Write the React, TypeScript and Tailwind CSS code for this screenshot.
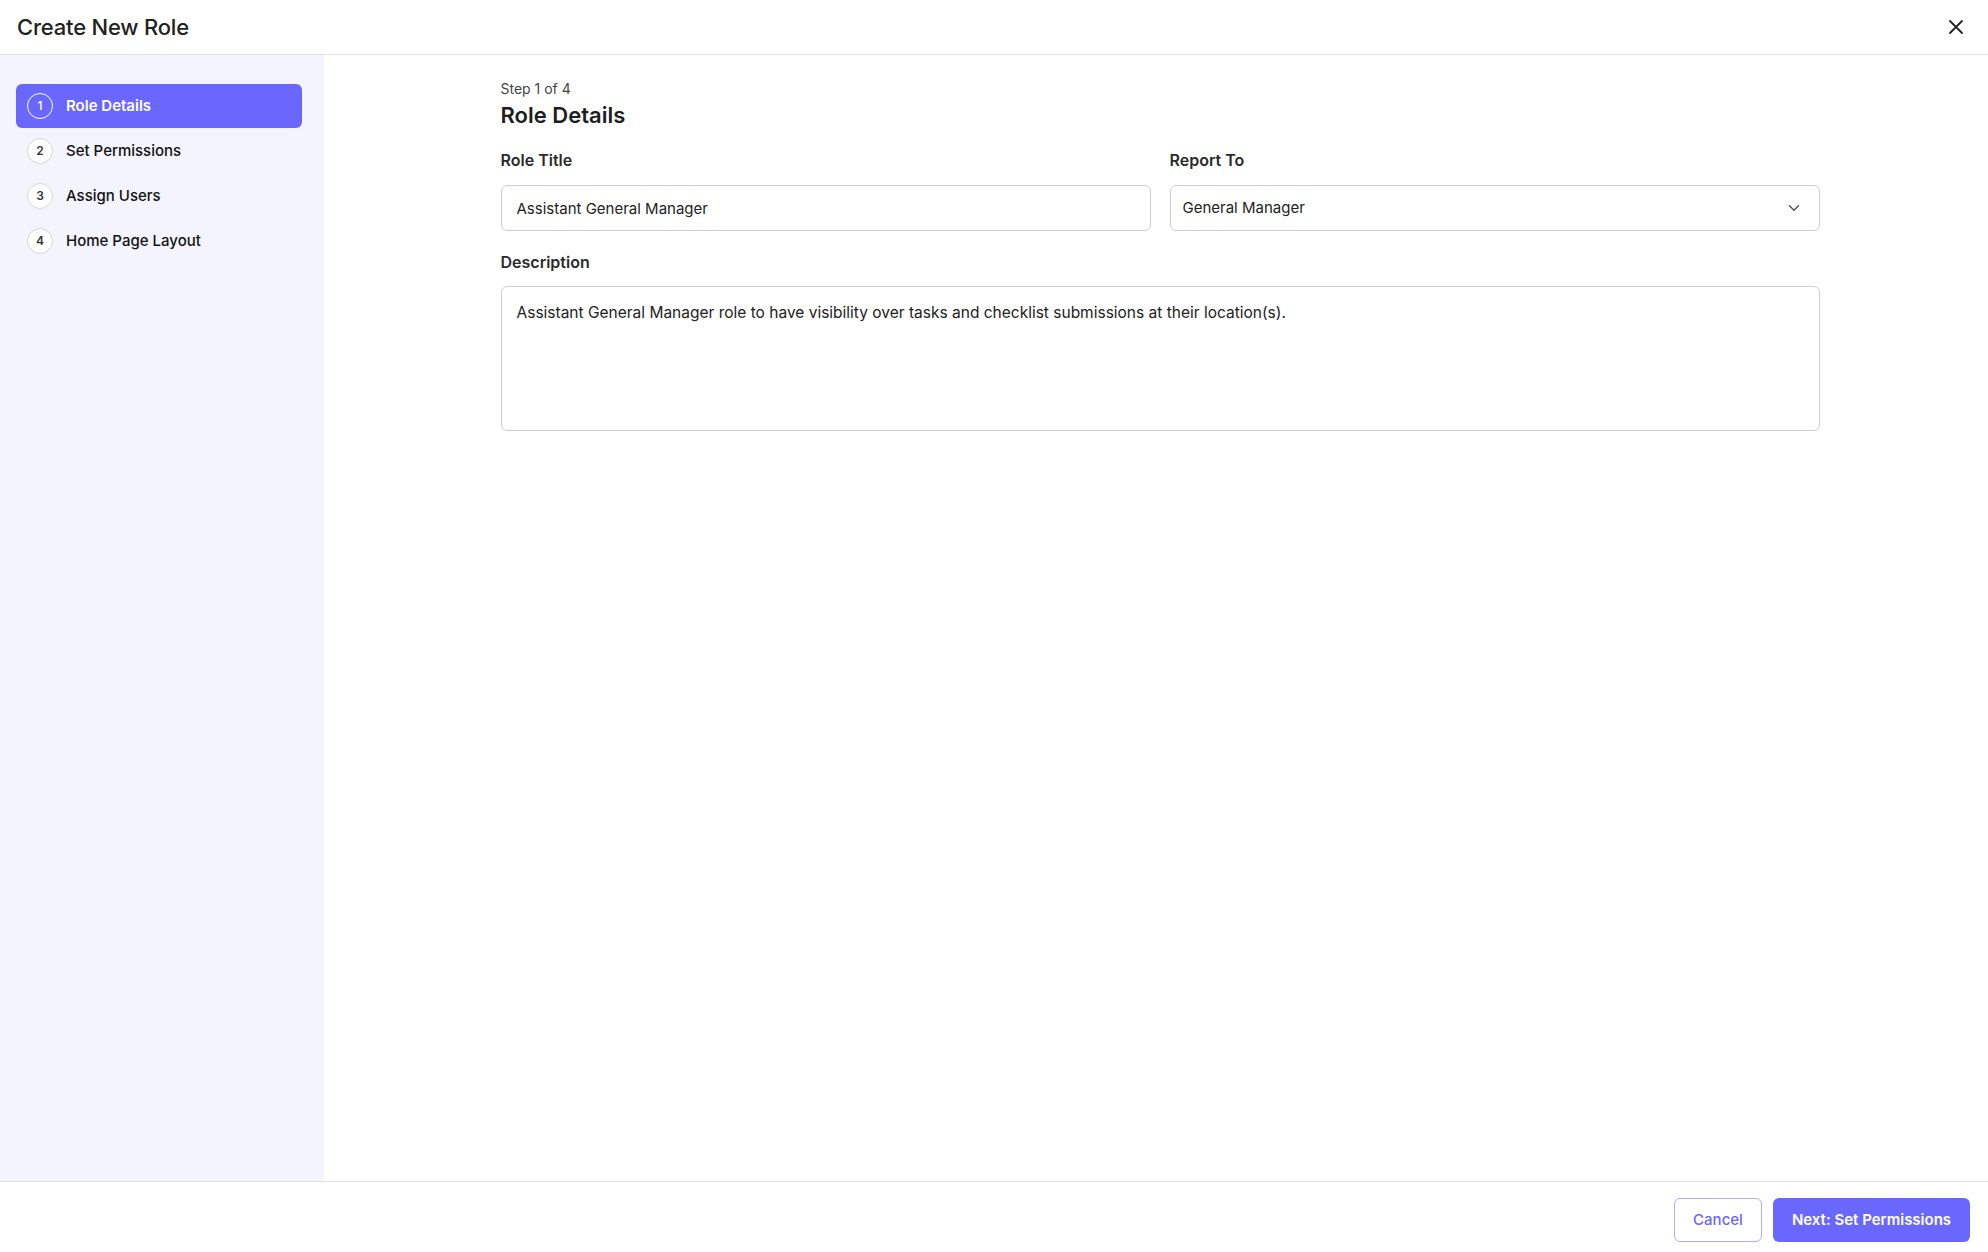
import React from "react";
import { ChevronDown } from "lucide-react";

const STEPS = ["Role Details", "Set Permissions", "Assign Users", "Home Page Layout"];

function CloseIcon() {
  return (
    <svg width="16" height="16" viewBox="0 0 16 16" fill="none" stroke="#222" strokeWidth="1.8" strokeLinecap="round">
      <path d="M2 2L14 14M14 2L2 14" />
    </svg>
  );
}

export default function App() {
  const active = 0;

  return (
    <div className="h-screen w-full flex flex-col bg-white text-[#1d1d1f]" style={{ fontFamily: "Inter, 'Noto Sans', sans-serif" }}>
      {/* header */}
      <div className="h-[55px] shrink-0 flex items-center justify-between pl-[17px] pr-[20px] border-b border-[#e2e2e2]">
        <h1 className="text-[22px] font-medium tracking-[-0.2px] text-[#222]">Create New Role</h1>
        <button className="p-1">
          <CloseIcon />
        </button>
      </div>

      <div className="flex-1 flex min-h-0">
        {/* stepper */}
        <div className="w-[324px] shrink-0 bg-[#f4f4fe] pl-4 pr-[22px] pt-[29px] flex flex-col gap-[1px]">
          {STEPS.map((label, i) => {
            const isActive = i === active;
            return (
              <div
                key={label}
                className={
                  isActive
                    ? "h-[44px] flex items-center gap-[13px] pl-[11px] rounded-md bg-[#6a67fe] text-white"
                    : "h-[44px] flex items-center gap-[13px] pl-[11px] rounded-md text-[#111]"
                }
              >
                <span
                  className={
                    isActive
                      ? "w-[26px] h-[26px] rounded-full border-[1.5px] border-white flex items-center justify-center text-[12px] font-medium"
                      : "w-[26px] h-[26px] rounded-full border border-[#d6d6de] bg-white flex items-center justify-center text-[12px] font-semibold text-[#333]"
                  }
                >
                  {i + 1}
                </span>
                <span className={isActive ? "text-[15px] font-semibold" : "text-[15px] font-medium"}>{label}</span>
              </div>
            );
          })}
        </div>

        {/* form */}
        <div className="flex-1 min-w-0 pl-[8px]">
          <div className="w-[1319px] mx-auto pt-[25px]">
            <div className="text-[14px] leading-[18px] text-[#444]">Step 1 of 4</div>
            <h2 className="mt-[3px] text-[22px] leading-[28px] font-semibold text-[#1d1d1f]">Role Details</h2>

            <div className="mt-[21px] grid grid-cols-2 gap-[19px]">
              <div>
                <label className="block text-[16px] leading-[20px] font-semibold text-[#2a2a2a]">Role Title</label>
                <input
                  className="mt-[15px] w-full h-[46px] rounded-md border border-[#cfcfcf] px-[15px] text-[15px] text-[#222] outline-none"
                  defaultValue="Assistant General Manager"
                />
              </div>
              <div>
                <label className="block text-[16px] leading-[20px] font-semibold text-[#2a2a2a]">Report To</label>
                <div className="mt-[15px] w-full h-[46px] rounded-md border border-[#cfcfcf] pl-[12px] pr-[16px] flex items-center justify-between text-[15px] text-[#222]">
                  <span>General Manager</span>
                  <ChevronDown size={18} color="#555" strokeWidth={2} />
                </div>
              </div>
            </div>

            <label className="mt-[21px] block text-[16px] leading-[20px] font-semibold text-[#2a2a2a]">Description</label>
            <textarea
              className="mt-[14px] w-full h-[145px] rounded-md border border-[#cfcfcf] px-[15px] py-[16px] text-[15.5px] leading-[20px] text-[#222] outline-none resize-none"
              defaultValue="Assistant General Manager role to have visibility over tasks and checklist submissions at their location(s)."
            />
          </div>
        </div>
      </div>

      {/* footer */}
      <div className="h-[71px] shrink-0 border-t border-[#e2e2e2] flex items-center justify-end gap-[11px] pr-[18px] pt-[6px]">
        <button className="h-[44px] w-[88px] rounded-md border border-[#aeacff] text-[#6a67fe] text-[15px] font-medium">Cancel</button>
        <button className="h-[44px] w-[197px] rounded-md bg-[#6a67fe] text-white text-[15px] font-semibold">Next: Set Permissions</button>
      </div>
    </div>
  );
}
